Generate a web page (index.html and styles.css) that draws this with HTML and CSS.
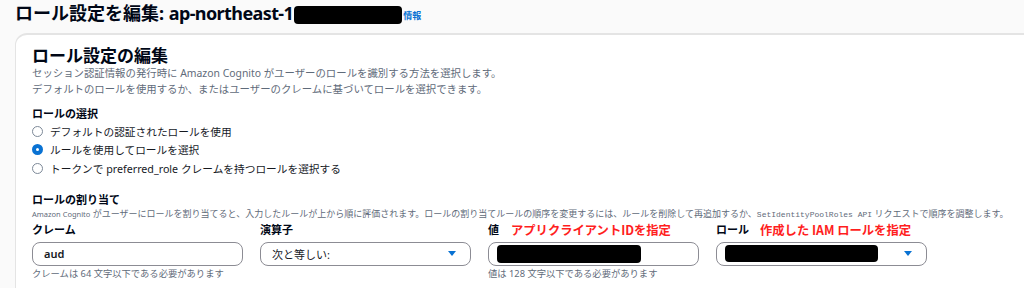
FILE: index.html
```html
<!DOCTYPE html>
<html>
<head>
  <meta charset="utf-8">
  <title>ロール設定を編集</title>
  <link rel="stylesheet" href="styles.css">
</head>
<body>
  <div class="page-header">
    <h1>ロール設定を編集: <span class="region">ap-northeast-1</span><span class="redact title-redact"></span><a class="info" href="#">情報</a></h1>
  </div>

  <div class="card">
    <h2>ロール設定の編集</h2>
    <p class="desc">セッション認証情報の発行時に Amazon Cognito がユーザーのロールを識別する方法を選択します。</p>
    <p class="desc">デフォルトのロールを使用するか、またはユーザーのクレームに基づいてロールを選択できます。</p>

    <div class="field-title first">ロールの選択</div>
    <div class="radio-row"><span class="radio"></span>デフォルトの認証されたロールを使用</div>
    <div class="radio-row"><span class="radio checked"></span>ルールを使用してロールを選択</div>
    <div class="radio-row"><span class="radio"></span>トークンで preferred_role クレームを持つロールを選択する</div>

    <div class="field-title second">ロールの割り当て</div>
    <p class="small-desc"><span class="latin">Amazon Cognito</span> がユーザーにロールを割り当てると、入力したルールが上から順に評価されます。ロールの割り当てルールの順序を変更するには、ルールを削除して再追加するか、<span class="mono">SetIdentityPoolRoles API</span> リクエストで順序を調整します。</p>

    <div class="rule-grid">
      <div class="col">
        <div class="label">クレーム</div>
        <div class="input"><span class="value">aud</span></div>
        <div class="hint">クレームは 64 文字以下である必要があります</div>
      </div>
      <div class="col">
        <div class="label">演算子</div>
        <div class="input select"><span>次と等しい:</span><span class="caret"></span></div>
      </div>
      <div class="col">
        <div class="label">値<span class="note">アプリクライアントIDを指定</span></div>
        <div class="input redacted-input"><span class="redact value-redact"></span></div>
        <div class="hint">値は 128 文字以下である必要があります</div>
      </div>
      <div class="col">
        <div class="label">ロール<span class="note">作成した IAM ロールを指定</span></div>
        <div class="input select redacted-input"><span class="redact role-redact"></span><span class="caret"></span></div>
      </div>
    </div>
  </div>
</body>
</html>
```

FILE: styles.css
```css
body {
  margin: 0;
  background-color: #fafafa;
  font-family: "Noto Sans", "Noto Sans CJK JP", sans-serif;
  color: #16191f;
  overflow: hidden;
}

.page-header {
  height: 33px;
  padding: 0 15px;
}

h1 {
  margin: 0;
  font-size: 18px;
  line-height: 20px;
  font-weight: 700;
  color: #000716;
  display: flex;
  align-items: center;
  white-space: pre;
}

.region {
  letter-spacing: -0.6px;
}

.redact {
  display: inline-block;
  background-color: #000;
  border-radius: 4px;
}

.title-redact {
  width: 108px;
  height: 18px;
  margin-left: 1px;
  margin-top: 4px;
}

.info {
  font-size: 9px;
  font-weight: 700;
  color: #0972d3;
  text-decoration: none;
  margin-left: 1px;
  margin-top: 6px;
}

.card {
  margin-left: 15px;
  width: 1040px;
  height: 300px;
  background-color: #fff;
  border: 1px solid #e4e4e4;
  border-top-width: 2px;
  border-radius: 12px;
  padding: 11px 16px 0;
}

h2 {
  margin: 0;
  font-size: 17px;
  line-height: 19px;
  font-weight: 700;
  color: #000716;
}

.desc {
  margin: 0;
  font-size: 10.4px;
  line-height: 16px;
  color: #5f6b7a;
}

.field-title {
  font-size: 11px;
  line-height: 16px;
  font-weight: 700;
  color: #000716;
}

.field-title.first {
  margin-top: 9px;
}

.field-title.second {
  margin-top: 14px;
  line-height: 15px;
}

.radio-row {
  display: flex;
  align-items: center;
  height: 18.5px;
  font-size: 10.7px;
  color: #16191f;
}

.radio {
  width: 11px;
  height: 11px;
  box-sizing: border-box;
  border: 1.5px solid #7d8998;
  border-radius: 50%;
  margin-right: 7px;
}

.radio.checked {
  border: 4px solid #0972d3;
}

.small-desc {
  margin: 0;
  font-size: 9px;
  line-height: 14px;
  color: #5f6b7a;
  white-space: nowrap;
}

.latin {
  font-size: 7.5px;
}

.mono {
  font-family: "Liberation Mono", monospace;
  font-size: 8px;
}

.rule-grid {
  display: grid;
  grid-template-columns: repeat(4, 211px);
  column-gap: 17px;
}

.label {
  height: 16px;
  font-size: 11px;
  line-height: 16px;
  font-weight: 700;
  color: #000716;
  display: flex;
  align-items: center;
}

.note {
  margin-left: 12px;
  font-family: "Noto Sans CJK JP", sans-serif;
  font-size: 12.3px;
  font-weight: 700;
  color: #ff1e1e;
}

.col:nth-child(4) .note {
  margin-left: 11px;
}

.input {
  margin-top: 4px;
  height: 24px;
  box-sizing: border-box;
  border: 1px solid #8c8c94;
  border-radius: 8px;
  padding: 0 11px;
  display: flex;
  align-items: center;
  font-size: 11px;
  color: #16191f;
}

.input .value {
  font-weight: 600;
}

.select {
  justify-content: space-between;
}

.caret {
  width: 0;
  height: 0;
  border-left: 4px solid transparent;
  border-right: 4px solid transparent;
  border-top: 5px solid #0972d3;
  margin-right: 3px;
}

.redacted-input {
  padding-left: 8px;
}

.value-redact {
  width: 144px;
  height: 18px;
}

.role-redact {
  width: 153px;
  height: 17px;
}

.hint {
  margin-top: 1px;
  font-size: 9.3px;
  line-height: 14px;
  color: #5f6b7a;
}
```
